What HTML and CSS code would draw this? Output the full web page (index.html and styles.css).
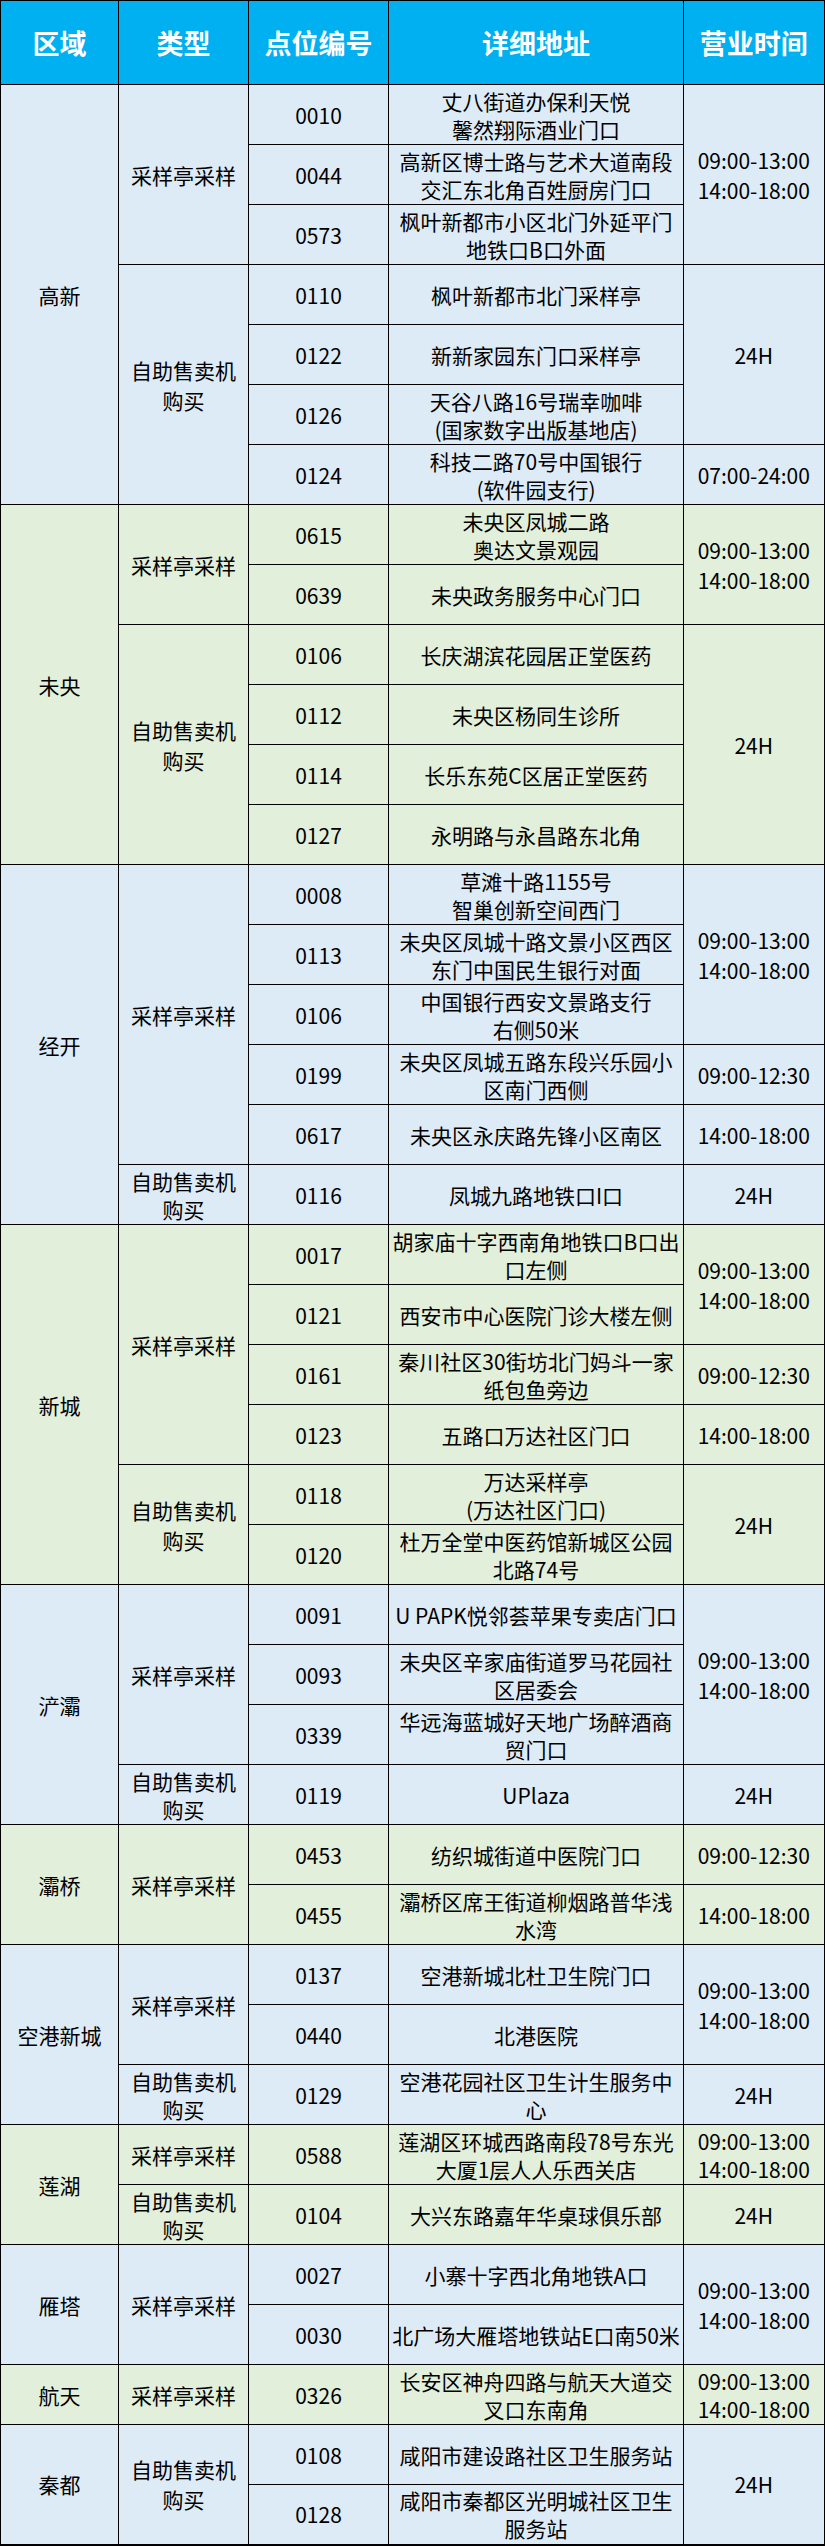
FILE: index.html
```html
<!DOCTYPE html>
<html lang="zh-CN">
<head>
<meta charset="utf-8">
<title>采样点位</title>
<link rel="stylesheet" href="styles.css">
</head>
<body>
<table class="sheet">
<colgroup>
<col class="c-area"><col class="c-type"><col class="c-code"><col class="c-addr"><col class="c-time">
</colgroup>
<thead>
<tr><th>区域</th><th>类型</th><th>点位编号</th><th>详细地址</th><th>营业时间</th></tr>
</thead>
<tbody>
<tr class="blue"><td rowspan="7">高新</td><td rowspan="3" class="type">采样亭采样</td><td>0010</td><td>丈八街道办保利天悦<br>馨然翔际酒业门口</td><td rowspan="3" class="time">09:00-13:00<br>14:00-18:00</td></tr>
<tr class="blue"><td>0044</td><td>高新区博士路与艺术大道南段<br>交汇东北角百姓厨房门口</td></tr>
<tr class="blue"><td>0573</td><td>枫叶新都市小区北门外延平门<br>地铁口B口外面</td></tr>
<tr class="blue"><td rowspan="4" class="type">自助售卖机<br>购买</td><td>0110</td><td>枫叶新都市北门采样亭</td><td rowspan="3" class="time">24H</td></tr>
<tr class="blue"><td>0122</td><td>新新家园东门口采样亭</td></tr>
<tr class="blue"><td>0126</td><td>天谷八路16号瑞幸咖啡<br>(国家数字出版基地店)</td></tr>
<tr class="blue"><td>0124</td><td>科技二路70号中国银行<br>(软件园支行)</td><td class="time">07:00-24:00</td></tr>

<tr class="green"><td rowspan="6">未央</td><td rowspan="2" class="type">采样亭采样</td><td>0615</td><td>未央区凤城二路<br>奥达文景观园</td><td rowspan="2" class="time">09:00-13:00<br>14:00-18:00</td></tr>
<tr class="green"><td>0639</td><td>未央政务服务中心门口</td></tr>
<tr class="green"><td rowspan="4" class="type">自助售卖机<br>购买</td><td>0106</td><td>长庆湖滨花园居正堂医药</td><td rowspan="4" class="time">24H</td></tr>
<tr class="green"><td>0112</td><td>未央区杨同生诊所</td></tr>
<tr class="green"><td>0114</td><td>长乐东苑C区居正堂医药</td></tr>
<tr class="green"><td>0127</td><td>永明路与永昌路东北角</td></tr>

<tr class="blue"><td rowspan="6">经开</td><td rowspan="5" class="type">采样亭采样</td><td>0008</td><td>草滩十路1155号<br>智巢创新空间西门</td><td rowspan="3" class="time">09:00-13:00<br>14:00-18:00</td></tr>
<tr class="blue"><td>0113</td><td>未央区凤城十路文景小区西区<br>东门中国民生银行对面</td></tr>
<tr class="blue"><td>0106</td><td>中国银行西安文景路支行<br>右侧50米</td></tr>
<tr class="blue"><td>0199</td><td>未央区凤城五路东段兴乐园小<br>区南门西侧</td><td class="time">09:00-12:30</td></tr>
<tr class="blue"><td>0617</td><td>未央区永庆路先锋小区南区</td><td class="time">14:00-18:00</td></tr>
<tr class="blue"><td class="type single">自助售卖机<br>购买</td><td>0116</td><td>凤城九路地铁口I口</td><td class="time">24H</td></tr>

<tr class="green"><td rowspan="6">新城</td><td rowspan="4" class="type">采样亭采样</td><td>0017</td><td>胡家庙十字西南角地铁口B口出<br>口左侧</td><td rowspan="2" class="time">09:00-13:00<br>14:00-18:00</td></tr>
<tr class="green"><td>0121</td><td>西安市中心医院门诊大楼左侧</td></tr>
<tr class="green"><td>0161</td><td>秦川社区30街坊北门妈斗一家<br>纸包鱼旁边</td><td class="time">09:00-12:30</td></tr>
<tr class="green"><td>0123</td><td>五路口万达社区门口</td><td class="time">14:00-18:00</td></tr>
<tr class="green"><td rowspan="2" class="type">自助售卖机<br>购买</td><td>0118</td><td>万达采样亭<br>(万达社区门口)</td><td rowspan="2" class="time">24H</td></tr>
<tr class="green"><td>0120</td><td>杜万全堂中医药馆新城区公园<br>北路74号</td></tr>

<tr class="blue"><td rowspan="4">浐灞</td><td rowspan="3" class="type">采样亭采样</td><td>0091</td><td>U PAPK悦邻荟苹果专卖店门口</td><td rowspan="3" class="time">09:00-13:00<br>14:00-18:00</td></tr>
<tr class="blue"><td>0093</td><td>未央区辛家庙街道罗马花园社<br>区居委会</td></tr>
<tr class="blue"><td>0339</td><td>华远海蓝城好天地广场醉酒商<br>贸门口</td></tr>
<tr class="blue"><td class="type single">自助售卖机<br>购买</td><td>0119</td><td>UPlaza</td><td class="time">24H</td></tr>

<tr class="green"><td rowspan="2">灞桥</td><td rowspan="2" class="type">采样亭采样</td><td>0453</td><td>纺织城街道中医院门口</td><td class="time">09:00-12:30</td></tr>
<tr class="green"><td>0455</td><td>灞桥区席王街道柳烟路普华浅<br>水湾</td><td class="time">14:00-18:00</td></tr>

<tr class="blue"><td rowspan="3">空港新城</td><td rowspan="2" class="type">采样亭采样</td><td>0137</td><td>空港新城北杜卫生院门口</td><td rowspan="2" class="time">09:00-13:00<br>14:00-18:00</td></tr>
<tr class="blue"><td>0440</td><td>北港医院</td></tr>
<tr class="blue"><td class="type single">自助售卖机<br>购买</td><td>0129</td><td>空港花园社区卫生计生服务中<br>心</td><td class="time">24H</td></tr>

<tr class="green"><td rowspan="2">莲湖</td><td class="type">采样亭采样</td><td>0588</td><td>莲湖区环城西路南段78号东光<br>大厦1层人人乐西关店</td><td class="time single">09:00-13:00<br>14:00-18:00</td></tr>
<tr class="green"><td class="type single">自助售卖机<br>购买</td><td>0104</td><td>大兴东路嘉年华桌球俱乐部</td><td class="time">24H</td></tr>

<tr class="blue"><td rowspan="2">雁塔</td><td rowspan="2" class="type">采样亭采样</td><td>0027</td><td>小寨十字西北角地铁A口</td><td rowspan="2" class="time">09:00-13:00<br>14:00-18:00</td></tr>
<tr class="blue"><td>0030</td><td>北广场大雁塔地铁站E口南50米</td></tr>

<tr class="green"><td>航天</td><td class="type">采样亭采样</td><td>0326</td><td>长安区神舟四路与航天大道交<br>叉口东南角</td><td class="time single">09:00-13:00<br>14:00-18:00</td></tr>

<tr class="blue"><td rowspan="2">秦都</td><td rowspan="2" class="type">自助售卖机<br>购买</td><td>0108</td><td>咸阳市建设路社区卫生服务站</td><td rowspan="2" class="time">24H</td></tr>
<tr class="blue"><td>0128</td><td>咸阳市秦都区光明城社区卫生<br>服务站</td></tr>
</tbody>
</table>
</body>
</html>
```

FILE: styles.css
```css
html, body {
  margin: 0;
  padding: 0;
  background: #ffffff;
}

body {
  font-family: "Noto Sans CJK SC", "Microsoft YaHei", "Noto Sans", sans-serif;
  color: #000000;
}

.sheet {
  border-collapse: collapse;
  table-layout: fixed;
  width: 824px;
  border-right: 2px solid #000000;
  border-bottom: 2px solid #000000;
}

.c-area { width: 118px; }
.c-type { width: 130px; }
.c-code { width: 140px; }
.c-addr { width: 295px; }
.c-time { width: 141px; }

.sheet th,
.sheet td {
  border: 1px solid #000000;
  padding: 0 2px;
  text-align: center;
  vertical-align: middle;
  white-space: nowrap;
  font-size: 21px;
  line-height: 28px;
  font-weight: 400;
}

.sheet thead tr {
  height: 84px;
}

.sheet th {
  background: #00b0f0;
  color: #ffffff;
  font-weight: 700;
  font-size: 27px;
  line-height: 36px;
}

.sheet tbody tr {
  height: 60px;
}

.sheet .type,
.sheet .time {
  line-height: 30px;
}

.sheet .single {
  line-height: 28px;
}

.blue td {
  background: #ddebf7;
}

.green td {
  background: #e2efda;
}
```
